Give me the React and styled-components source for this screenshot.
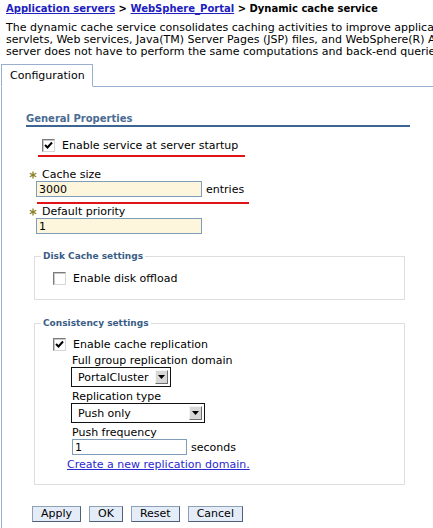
import React from 'react'
import styled, { createGlobalStyle } from 'styled-components'

const GlobalStyle = createGlobalStyle`
  html, body { margin: 0; padding: 0; background: #fff; overflow: hidden; }
  body { font-family: "DejaVu Sans", Verdana, sans-serif; font-size: 11px; color: #000; }
`

const Page = styled.div`
  width: 433px;
  height: 528px;
  overflow: hidden;
  box-sizing: border-box;
  padding: 2px 0 0 1px;
`

const Crumbs = styled.div`
  padding-left: 5px;
  font-size: 10px;
  font-weight: bold;
  line-height: 13px;
  white-space: nowrap;
  a { color: #2020c0; text-decoration: underline; }
`

const Intro = styled.div`
  margin-top: 7px;
  padding-left: 5px;
  line-height: 12px;
  white-space: nowrap;
`

const Tabs = styled.div`
  display: flex;
  margin-top: 6px;
`

const Tab = styled.div`
  position: relative;
  z-index: 1;
  box-sizing: border-box;
  width: 92px;
  height: 23px;
  margin-bottom: -1px;
  padding-left: 8px;
  line-height: 21px;
  background: #fff;
  border: 1px solid #9aaed2;
  border-bottom-color: #fff;
`

const Panel = styled.div`
  width: 640px;
  min-height: 460px;
  border-top: 1px solid #9aaed2;
  border-left: 1px solid #9aaed2;
  padding: 25px 0 0 24px;
`

const Heading = styled.div`
  box-sizing: border-box;
  width: 384px;
  font-size: 10px;
  font-weight: bold;
  line-height: 13px;
  color: #4a6c93;
  border-bottom: 2px solid #3d6592;
`

const Form = styled.div`
  margin-left: 8px;
  display: flex;
  flex-direction: column;
  align-items: flex-start;
`

const CheckRow = styled.label`
  display: flex;
  align-items: center;
  gap: 7px;
  height: 15px;
  margin-top: ${p => p.$top || 0}px;
  margin-left: ${p => p.$left || 0}px;
  line-height: 15px;
`

const Box = styled.span`
  box-sizing: border-box;
  width: 13px;
  height: 13px;
  background: #fff;
  border: 1px solid;
  border-color: #7b7b7b #d6d6d6 #d6d6d6 #7b7b7b;
  box-shadow: inset 1px 1px 0 #c8c8c8;
  display: flex;
  align-items: center;
  justify-content: center;
`

const Marker = styled.div`
  height: 2px;
  background: #e01414;
  width: ${p => p.$width}px;
  margin-top: ${p => p.$top}px;
  margin-left: ${p => p.$left}px;
`

const Label = styled.div`
  display: flex;
  align-items: center;
  gap: 5px;
  line-height: 12px;
  margin-top: ${p => p.$top || 0}px;
  margin-left: ${p => p.$left || 0}px;
  white-space: nowrap;
`

const InputRow = styled.div`
  display: flex;
  align-items: center;
  gap: 4px;
  margin-left: ${p => p.$left || 0}px;
`

const Field = styled.input`
  box-sizing: border-box;
  width: ${p => p.$width}px;
  height: 16px;
  margin: 0;
  padding: 0 2px;
  font: inherit;
  line-height: 14px;
  color: #000;
  background: ${p => (p.$plain ? '#fff' : '#fef6dc')};
  border: 1px solid #7f9db9;
  outline: none;
`

const Group = styled.fieldset`
  box-sizing: border-box;
  width: 371px;
  margin: ${p => p.$top}px 0 0 0;
  padding: 0 0 ${p => p.$bottom}px 18px;
  border: 1px solid #dedede;
  min-inline-size: 0;
`

const Legend = styled.legend`
  margin-left: -12px;
  padding: 0 2px;
  font-size: 9px;
  font-weight: bold;
  line-height: 12px;
  color: #3a5d86;
`

const Sub = styled.div`
  margin-left: 19px;
  display: flex;
  flex-direction: column;
  align-items: flex-start;
`

const Select = styled.div`
  box-sizing: border-box;
  display: flex;
  align-items: center;
  justify-content: space-between;
  width: ${p => p.$width}px;
  height: 20px;
  margin-left: -1px;
  padding: 0 2px 0 6px;
  border: 1px solid #111;
  white-space: nowrap;
`

const Drop = styled.span`
  box-sizing: border-box;
  width: 13px;
  height: 14px;
  background: #d8d8d8;
  border: 1px solid;
  border-color: #f4f4f4 #6e6e6e #6e6e6e #f4f4f4;
  display: flex;
  align-items: center;
  justify-content: center;
`

const Link = styled.a`
  margin-top: 4px;
  margin-left: -5px;
  line-height: 12px;
  color: #2a2ad0;
  text-decoration: underline;
`

const Buttons = styled.div`
  display: flex;
  gap: 8px;
  margin: 21px 0 0 -2px;
`

const Button = styled.button`
  box-sizing: border-box;
  height: 16px;
  margin: 0;
  padding: 0 8px;
  font: inherit;
  line-height: 14px;
  color: #000;
  background: #e4ecf8;
  border: 1px solid;
  border-color: #8ea0b8 #4f6078 #4f6078 #8ea0b8;
`

const Tick = () => (
  <svg width="9" height="9" viewBox="0 0 9 9">
    <path d="M1 4 L3.5 6.5 L8 1.5" fill="none" stroke="#000" strokeWidth="2" />
  </svg>
)

const Star = () => (
  <svg width="8" height="8" viewBox="0 0 8 8">
    <g stroke="#8a7d22" strokeWidth="1.3">
      <line x1="4" y1="0.5" x2="4" y2="7.5" />
      <line x1="0.8" y1="2.2" x2="7.2" y2="5.8" />
      <line x1="0.8" y1="5.8" x2="7.2" y2="2.2" />
    </g>
  </svg>
)

const Arrow = () => (
  <svg width="7" height="4" viewBox="0 0 7 4">
    <path d="M0 0 H7 L3.5 4 Z" fill="#000" />
  </svg>
)

const Check = ({ checked, top, left, children }) => (
  <CheckRow $top={top} $left={left}>
    <Box>{checked && <Tick />}</Box>
    {children}
  </CheckRow>
)

const App = () => {
  return (
    <>
      <GlobalStyle />
      <Page>
        <Crumbs>
          <a href="#servers">Application servers</a> &gt; <a href="#portal">WebSphere_Portal</a> &gt; Dynamic cache service
        </Crumbs>
        <Intro>
          The dynamic cache service consolidates caching activities to improve application performance. It caches the output of
          <br />
          servlets, Web services, Java(TM) Server Pages (JSP) files, and WebSphere(R) Application Server commands so that the application
          <br />
          server does not have to perform the same computations and back-end queries multiple times.
        </Intro>
        <Tabs>
          <Tab>Configuration</Tab>
        </Tabs>
        <Panel>
          <Heading>General Properties</Heading>
          <Form>
            <Check checked top={11} left={8}>Enable service at server startup</Check>
            <Marker $width={207} $top={2} $left={4} />

            <Label $top={12} $left={-5}><Star />Cache size</Label>
            <InputRow $left={2}>
              <Field $width={166} defaultValue="3000" readOnly />
              <span>entries</span>
            </InputRow>
            <Marker $width={212} $top={5} $left={3} />

            <Label $top={2} $left={-5}><Star />Default priority</Label>
            <InputRow $left={2}>
              <Field $width={166} defaultValue="1" readOnly />
            </InputRow>

            <Group $top={16} $bottom={13}>
              <Legend>Disk Cache settings</Legend>
              <Check top={9}>Enable disk offload</Check>
            </Group>

            <Group $top={17} $bottom={13}>
              <Legend>Consistency settings</Legend>
              <Check checked top={8}>Enable cache replication</Check>
              <Sub>
                <Label $top={3}>Full group replication domain</Label>
                <Select $width={100}>PortalCluster<Drop><Arrow /></Drop></Select>
                <Label $top={4}>Replication type</Label>
                <Select $width={134}>Push only<Drop><Arrow /></Drop></Select>
                <Label $top={4}>Push frequency</Label>
                <InputRow>
                  <Field $plain $width={115} defaultValue="1" readOnly />
                  <span>seconds</span>
                </InputRow>
                <Link href="#domain">Create a new replication domain.</Link>
              </Sub>
            </Group>

            <Buttons>
              <Button>Apply</Button>
              <Button>OK</Button>
              <Button>Reset</Button>
              <Button>Cancel</Button>
            </Buttons>
          </Form>
        </Panel>
      </Page>
    </>
  )
}

export default App
